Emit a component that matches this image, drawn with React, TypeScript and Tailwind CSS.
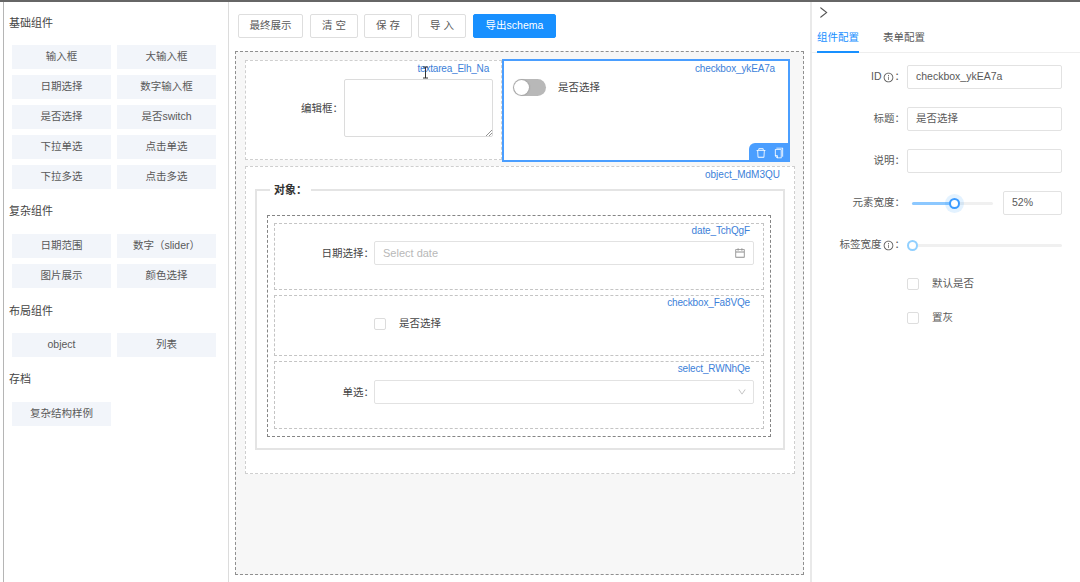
import type { ReactNode } from 'react';
import {
  AiOutlineCalendar,
  AiOutlineCopy,
  AiOutlineDelete,
  AiOutlineDown,
  AiOutlineInfoCircle,
  AiOutlineRight,
} from 'react-icons/ai';

const sections = [
  {
    title: '基础组件',
    titleClass: 'h-[43px] pt-[14px]',
    items: ['输入框', '大输入框', '日期选择', '数字输入框', '是否选择', '是否switch', '下拉单选', '点击单选', '下拉多选', '点击多选'],
  },
  { title: '复杂组件', titleClass: 'h-[45px] pt-[15px]', items: ['日期范围', '数字（slider）', '图片展示', '颜色选择'] },
  { title: '布局组件', titleClass: 'h-[45px] pt-[16px]', items: ['object', '列表'] },
  { title: '存档', titleClass: 'h-[45px] pt-[15px]', items: ['复杂结构样例'] },
];

function Sidebar() {
  return (
    <div className="ml-[3px] w-[226px] shrink-0 border-x border-l-[#b5b5b5] border-r-[#dcdcdc] pl-[5px]">
      {sections.map(section => (
        <div key={section.title}>
          <div className={`${section.titleClass} text-[11px] leading-[14px] text-[#444]`}>{section.title}</div>
          <div className="ml-[3px] grid w-[205px] grid-cols-[99px_99px] gap-x-[6px] gap-y-[6px]">
            {section.items.map(item => (
              <div key={item} className="flex h-[24px] items-center justify-center bg-[#f2f5fa] text-[10.5px] text-[#595959]">
                {item}
              </div>
            ))}
          </div>
        </div>
      ))}
    </div>
  );
}

function ToolButton({ label, className = '', primary = false }: { label: string; className?: string; primary?: boolean }) {
  return (
    <div
      className={`flex h-[24px] items-center justify-center whitespace-pre rounded-[2px] border text-[10.5px] ${
        primary ? 'border-[#1890ff] bg-[#1890ff] text-white' : 'border-[#dedede] bg-white text-[#595959]'
      } ${className}`}
    >
      {label}
    </div>
  );
}

function FieldId({ id }: { id: string }) {
  return <span className="absolute right-[13px] top-0 text-[10px] leading-[13px] tracking-[-0.15px] text-[#3c7fd9]">{id}</span>;
}

function InnerField({ id, className, children }: { id: string; className: string; children: ReactNode }) {
  return (
    <div className={`relative border border-dashed border-[#c4c4c4] bg-white ${className}`}>
      <FieldId id={id} />
      {children}
    </div>
  );
}

function InputBox({ className = '', children }: { className?: string; children?: ReactNode }) {
  return (
    <div className={`flex h-[24px] items-center rounded-[2px] border border-[#e2e2e2] bg-white text-[10.5px] ${className}`}>
      {children}
    </div>
  );
}

function Canvas() {
  return (
    <div className="flex-1 pl-[6px] pt-[13px]">
      <div className="flex h-[524px] w-[569px] flex-col border border-dashed border-[#8f8f8f] bg-[#f7f7f7] pl-[9px] pt-[7px]">
        <div className="flex items-start">
          {/* textarea field */}
          <div className="relative mt-[1px] h-[100px] w-[257px] border border-dashed border-[#cfcfcf] bg-white">
            <span className="absolute right-[12px] top-[1px] text-[10px] leading-[13px] tracking-[-0.2px] text-[#3c7fd9]">textarea_Elh_Na</span>
            <div className="flex pl-[55px] pt-[18px]">
              <span className="mt-[22px] w-[43px] text-[10.5px] leading-[14px] text-[#444]">编辑框：</span>
              <div className="relative h-[58px] w-[149px] rounded-[2px] border border-[#dcdcdc]">
                <svg className="absolute bottom-0 right-0" width="7" height="7" viewBox="0 0 7 7">
                  <path d="M1 7 7 1M4 7l3-3" stroke="#777" strokeWidth="0.8" />
                </svg>
              </div>
            </div>
            {/* text cursor */}
            <svg className="absolute left-[176px] top-[5px]" width="7" height="14" viewBox="0 0 7 14">
              <path d="M1 1h5M3.5 1v11M1 12h5" stroke="#333" strokeWidth="1" fill="none" />
            </svg>
          </div>
          {/* selected field */}
          <div className="relative h-[103px] w-[288px] border-2 border-[#4a9eff] bg-white">
            <span className="absolute right-[13px] top-[1px] text-[10px] leading-[13px] tracking-[-0.15px] text-[#3c7fd9]">checkbox_ykEA7a</span>
            <div className="flex items-center pl-[9px] pt-[18px]">
              <div className="flex h-[17px] w-[33px] items-center rounded-full bg-[#b8b8b8] pl-[1px]">
                <div className="h-[15px] w-[15px] rounded-full bg-white shadow-[0_0_2px_rgba(0,0,0,0.3)]" />
              </div>
              <span className="ml-[12px] text-[10.5px] text-[#444]">是否选择</span>
            </div>
            <div className="absolute bottom-[-2px] right-[-2px] flex h-[19px] w-[41px] items-center justify-center gap-[6px] rounded-tl-[6px] bg-[#4a9eff] text-white">
              <AiOutlineDelete size={12} />
              <AiOutlineCopy size={12} />
            </div>
          </div>
        </div>

        {/* object field */}
        <div className="relative mt-[4px] h-[308px] w-[550px] border border-dashed border-[#cfcfcf] bg-white pl-[9px]">
          <span className="absolute right-[14px] top-[1px] text-[10px] leading-[13px] text-[#3c7fd9]">object_MdM3QU</span>
          <fieldset className="mt-[16px] h-[267px] w-[530px] border-2 border-[#e4e4e4] pl-[10px]">
            <legend className="ml-[3px] px-[4px] text-[11px] font-semibold leading-[14px] text-[#333]">对象：</legend>
            <div className="mt-[18px] h-[222px] w-[504px] border border-dashed border-[#858585] pl-[6px] pt-[7px]">
              <InnerField id="date_TchQgF" className="h-[67px] w-[490px]">
                <div className="flex pt-[17px]">
                  <span className="w-[99px] pt-[5px] text-right text-[10.5px] leading-[14px] text-[#444]">日期选择：</span>
                  <InputBox className="w-[380px] justify-between pl-[8px] pr-[7px] text-[11px] text-[#b8b8b8]">
                    Select date
                    <AiOutlineCalendar size={12} className="text-[#8c8c8c]" />
                  </InputBox>
                </div>
              </InnerField>
              <InnerField id="checkbox_Fa8VQe" className="mt-[5px] h-[61px] w-[490px]">
                <div className="flex items-center pl-[99px] pt-[20px]">
                  <div className="h-[12px] w-[12px] rounded-[2px] border border-[#dcdcdc]" />
                  <span className="ml-[13px] text-[10.5px] text-[#444]">是否选择</span>
                </div>
              </InnerField>
              <InnerField id="select_RWNhQe" className="mt-[5px] h-[68px] w-[490px]">
                <div className="flex pt-[18px]">
                  <span className="w-[99px] pt-[5px] text-right text-[10.5px] leading-[14px] text-[#444]">单选：</span>
                  <InputBox className="w-[380px] justify-end pr-[6px] text-[#b8b8b8]">
                    <AiOutlineDown size={10} />
                  </InputBox>
                </div>
              </InnerField>
            </div>
          </fieldset>
        </div>
      </div>
    </div>
  );
}

function InfoIcon() {
  return <AiOutlineInfoCircle size={11} className="mx-[1px] text-[#555]" />;
}

function ConfigRow({ label, info = false, value = '' }: { label: string; info?: boolean; value?: string }) {
  return (
    <div className="mb-[18px] flex h-[24px] items-center">
      <span className="flex w-[95px] items-center justify-end pr-[2px] text-[10.5px] text-[#595959]">
        {label}
        {info && <InfoIcon />}：
      </span>
      <InputBox className="w-[155px] pl-[8px] text-[#595959]">{value}</InputBox>
    </div>
  );
}

function ConfigPanel() {
  return (
    <div className="flex-1 border-l-2 border-[#e9e9e9]">
      <div className="flex h-[18px] items-center pl-[4px] pt-[3px] text-[#555]">
        <AiOutlineRight size={15} />
      </div>
      <div className="flex h-[33px] border-b border-[#eeeeee] pl-[5px] text-[10.5px]">
        <div className="mr-[24px] h-[33px] w-[42px] border-b-2 border-[#1890ff] pt-[10px] leading-[14px] text-[#1890ff]">组件配置</div>
        <div className="pt-[10px] leading-[14px] text-[#595959]">表单配置</div>
      </div>
      <div className="pt-[12px]">
        <ConfigRow label="ID" info value="checkbox_ykEA7a" />
        <ConfigRow label="标题" value="是否选择" />
        <ConfigRow label="说明" />
        <div className="flex h-[24px] items-center">
          <span className="w-[95px] pr-[2px] text-right text-[10.5px] text-[#595959]">元素宽度：</span>
          <div className="relative ml-[5px] h-[3px] w-[81px] rounded-full bg-[#f0f0f0]">
            <div className="h-full w-[42px] rounded-full bg-[#8cc8ff]" />
            <div className="absolute left-[37px] top-[-4px] h-[11px] w-[11px] rounded-full border-2 border-[#3c9bff] bg-white shadow-[0_0_0_4px_rgba(24,144,255,0.12)]" />
          </div>
          <InputBox className="ml-[10px] w-[59px] pl-[8px] text-[#595959]">52%</InputBox>
        </div>
        <div className="mt-[18px] flex h-[24px] items-center">
          <span className="flex w-[95px] items-center justify-end pr-[2px] text-[10.5px] text-[#595959]">
            标签宽度
            <InfoIcon />：
          </span>
          <div className="relative ml-[5px] h-[3px] w-[150px] rounded-full bg-[#f0f0f0]">
            <div className="absolute left-[-5px] top-[-4px] h-[11px] w-[11px] rounded-full border-2 border-[#91d0ff] bg-white" />
          </div>
        </div>
        <div className="mt-[20px] flex h-[14px] items-center pl-[95px]">
          <div className="h-[12px] w-[12px] rounded-[2px] border border-[#dedede]" />
          <span className="ml-[13px] text-[10.5px] text-[#595959]">默认是否</span>
        </div>
        <div className="mt-[20px] flex h-[14px] items-center pl-[95px]">
          <div className="h-[12px] w-[12px] rounded-[2px] border border-[#dedede]" />
          <span className="ml-[13px] text-[10.5px] text-[#595959]">置灰</span>
        </div>
      </div>
    </div>
  );
}

export default function App() {
  return (
    <div className="flex h-[582px] w-[1080px] overflow-hidden border-t-2 border-[#666] bg-white font-['Liberation_Sans','Noto_Sans_CJK_SC',sans-serif]">
      <Sidebar />
      <div className="flex w-[581px] shrink-0 flex-col">
        <div className="flex gap-[6px] pl-[9px] pt-[12px]">
          <ToolButton label="最终展示" className="mr-[1px] w-[65px]" />
          <ToolButton label="清 空" className="w-[48px]" />
          <ToolButton label="保 存" className="w-[48px]" />
          <ToolButton label="导 入" className="w-[48px]" />
          <ToolButton label="导出schema" className="ml-[1px] w-[83px]" primary />
        </div>
        <Canvas />
      </div>
      <ConfigPanel />
    </div>
  );
}
